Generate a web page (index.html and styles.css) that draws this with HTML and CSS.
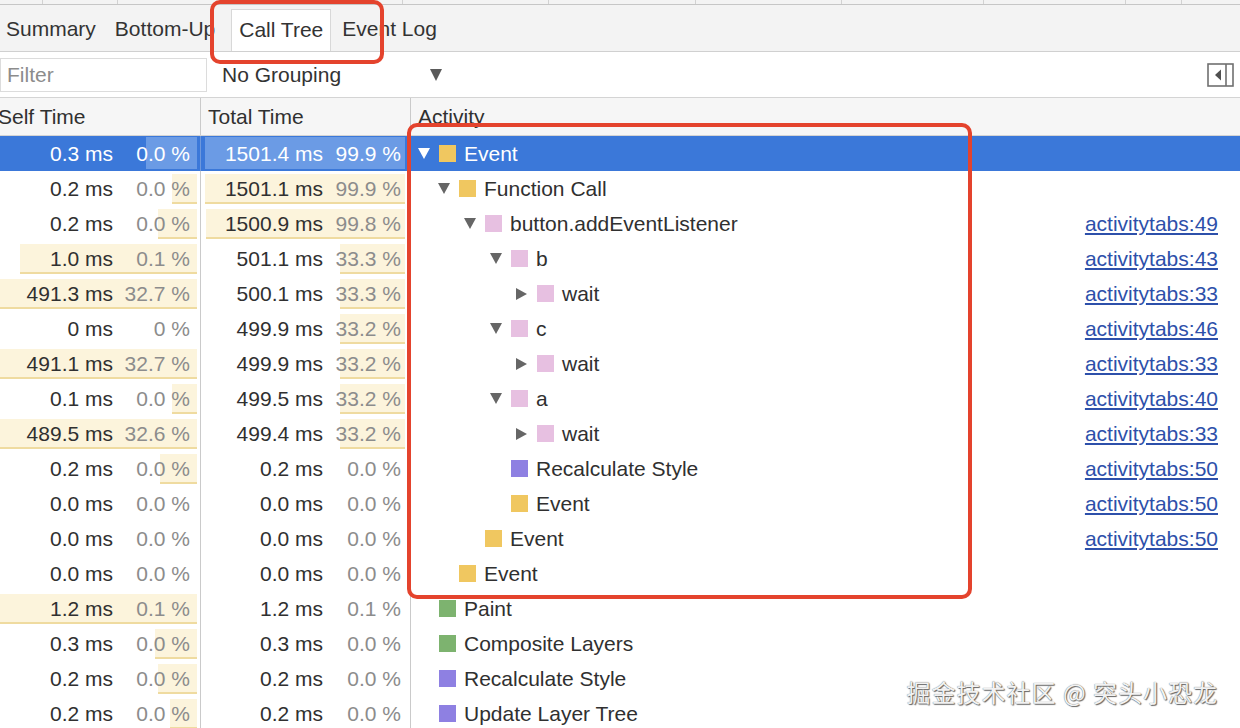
FILE: index.html
```html
<!DOCTYPE html>
<html lang="en">
<head>
    <meta charset="UTF-8">
    <meta name="viewport" content="width=device-width, initial-scale=1.0">
    <title>Call Tree</title>
    <link rel="stylesheet" href="styles.css">
</head>
<body>
<div class="panel">
    <!-- timeline overview ruler, cut off at the top -->
    <div class="ruler">
        <span style="width:43px"></span><span style="width:75px"></span><span style="width:285px"></span><span style="width:146px"></span><span style="width:147px"></span><span style="width:146px"></span><span style="width:142px"></span><span style="width:142px"></span><span style="width:56px"></span>
    </div>

    <div class="tabs">
        <div class="tab first">Summary</div>
        <div class="tab">Bottom-Up</div>
        <div class="tab active">Call Tree</div>
        <div class="tab">Event Log</div>
    </div>

    <div class="toolbar">
        <div class="filter">Filter</div>
        <div class="grouping">
            <span>No Grouping</span>
            <span class="arrow"></span>
        </div>
        <svg class="sidebar-toggle" width="27" height="24" viewBox="0 0 27 24">
            <rect x="1" y="1" width="25" height="22" fill="none" stroke="#707070" stroke-width="1.6"/>
            <line x1="19" y1="1" x2="19" y2="23" stroke="#707070" stroke-width="1.6"/>
            <polygon points="14,6.5 14,17.5 8,12" fill="#505050"/>
        </svg>
    </div>

    <div class="tree">
        <div class="row head">
            <div class="cell self-head">Self Time</div>
            <div class="cell total-head">Total Time</div>
            <div class="cell act-head">Activity</div>
        </div>

        <div class="row sel">
            <div class="cell time self"><span class="bar" style="width:51px"></span><span class="ms">0.3 ms</span><span class="pct">0.0 %</span></div>
            <div class="cell time total"><span class="bar" style="width:200px"></span><span class="ms">1501.4 ms</span><span class="pct">99.9 %</span></div>
            <div class="cell act d0"><span class="tog down"></span><span class="sq yellow"></span>Event</div>
        </div>
        <div class="row">
            <div class="cell time self"><span class="bar" style="width:25px"></span><span class="ms">0.2 ms</span><span class="pct">0.0 %</span></div>
            <div class="cell time total"><span class="bar" style="width:200px"></span><span class="ms">1501.1 ms</span><span class="pct">99.9 %</span></div>
            <div class="cell act d1"><span class="tog down"></span><span class="sq yellow"></span>Function Call</div>
        </div>
        <div class="row">
            <div class="cell time self"><span class="bar" style="width:39px"></span><span class="ms">0.2 ms</span><span class="pct">0.0 %</span></div>
            <div class="cell time total"><span class="bar" style="width:199px"></span><span class="ms">1500.9 ms</span><span class="pct">99.8 %</span></div>
            <div class="cell act d2"><span class="tog down"></span><span class="sq pink"></span>button.addEventListener<a class="link">activitytabs:49</a></div>
        </div>
        <div class="row">
            <div class="cell time self"><span class="bar" style="width:177px"></span><span class="ms">1.0 ms</span><span class="pct">0.1 %</span></div>
            <div class="cell time total"><span class="bar" style="width:65px"></span><span class="ms">501.1 ms</span><span class="pct">33.3 %</span></div>
            <div class="cell act d3"><span class="tog down"></span><span class="sq pink"></span>b<a class="link">activitytabs:43</a></div>
        </div>
        <div class="row">
            <div class="cell time self"><span class="bar" style="width:197px"></span><span class="ms">491.3 ms</span><span class="pct">32.7 %</span></div>
            <div class="cell time total"><span class="bar" style="width:65px"></span><span class="ms">500.1 ms</span><span class="pct">33.3 %</span></div>
            <div class="cell act d4"><span class="tog right"></span><span class="sq pink"></span>wait<a class="link">activitytabs:33</a></div>
        </div>
        <div class="row">
            <div class="cell time self"><span class="ms">0 ms</span><span class="pct">0 %</span></div>
            <div class="cell time total"><span class="bar" style="width:65px"></span><span class="ms">499.9 ms</span><span class="pct">33.2 %</span></div>
            <div class="cell act d3"><span class="tog down"></span><span class="sq pink"></span>c<a class="link">activitytabs:46</a></div>
        </div>
        <div class="row">
            <div class="cell time self"><span class="bar" style="width:197px"></span><span class="ms">491.1 ms</span><span class="pct">32.7 %</span></div>
            <div class="cell time total"><span class="bar" style="width:65px"></span><span class="ms">499.9 ms</span><span class="pct">33.2 %</span></div>
            <div class="cell act d4"><span class="tog right"></span><span class="sq pink"></span>wait<a class="link">activitytabs:33</a></div>
        </div>
        <div class="row">
            <div class="cell time self"><span class="bar" style="width:25px"></span><span class="ms">0.1 ms</span><span class="pct">0.0 %</span></div>
            <div class="cell time total"><span class="bar" style="width:65px"></span><span class="ms">499.5 ms</span><span class="pct">33.2 %</span></div>
            <div class="cell act d3"><span class="tog down"></span><span class="sq pink"></span>a<a class="link">activitytabs:40</a></div>
        </div>
        <div class="row">
            <div class="cell time self"><span class="bar" style="width:197px"></span><span class="ms">489.5 ms</span><span class="pct">32.6 %</span></div>
            <div class="cell time total"><span class="bar" style="width:65px"></span><span class="ms">499.4 ms</span><span class="pct">33.2 %</span></div>
            <div class="cell act d4"><span class="tog right"></span><span class="sq pink"></span>wait<a class="link">activitytabs:33</a></div>
        </div>
        <div class="row">
            <div class="cell time self"><span class="bar" style="width:37px"></span><span class="ms">0.2 ms</span><span class="pct">0.0 %</span></div>
            <div class="cell time total"><span class="ms">0.2 ms</span><span class="pct">0.0 %</span></div>
            <div class="cell act d3"><span class="tog"></span><span class="sq purple"></span>Recalculate Style<a class="link">activitytabs:50</a></div>
        </div>
        <div class="row">
            <div class="cell time self"><span class="ms">0.0 ms</span><span class="pct">0.0 %</span></div>
            <div class="cell time total"><span class="ms">0.0 ms</span><span class="pct">0.0 %</span></div>
            <div class="cell act d3"><span class="tog"></span><span class="sq yellow"></span>Event<a class="link">activitytabs:50</a></div>
        </div>
        <div class="row">
            <div class="cell time self"><span class="ms">0.0 ms</span><span class="pct">0.0 %</span></div>
            <div class="cell time total"><span class="ms">0.0 ms</span><span class="pct">0.0 %</span></div>
            <div class="cell act d2"><span class="tog"></span><span class="sq yellow"></span>Event<a class="link">activitytabs:50</a></div>
        </div>
        <div class="row">
            <div class="cell time self"><span class="ms">0.0 ms</span><span class="pct">0.0 %</span></div>
            <div class="cell time total"><span class="ms">0.0 ms</span><span class="pct">0.0 %</span></div>
            <div class="cell act d1"><span class="tog"></span><span class="sq yellow"></span>Event</div>
        </div>
        <div class="row">
            <div class="cell time self"><span class="bar" style="width:197px"></span><span class="ms">1.2 ms</span><span class="pct">0.1 %</span></div>
            <div class="cell time total"><span class="ms">1.2 ms</span><span class="pct">0.1 %</span></div>
            <div class="cell act d0"><span class="tog"></span><span class="sq green"></span>Paint</div>
        </div>
        <div class="row">
            <div class="cell time self"><span class="bar" style="width:42px"></span><span class="ms">0.3 ms</span><span class="pct">0.0 %</span></div>
            <div class="cell time total"><span class="ms">0.3 ms</span><span class="pct">0.0 %</span></div>
            <div class="cell act d0"><span class="tog"></span><span class="sq green"></span>Composite Layers</div>
        </div>
        <div class="row">
            <div class="cell time self"><span class="bar" style="width:39px"></span><span class="ms">0.2 ms</span><span class="pct">0.0 %</span></div>
            <div class="cell time total"><span class="ms">0.2 ms</span><span class="pct">0.0 %</span></div>
            <div class="cell act d0"><span class="tog"></span><span class="sq purple"></span>Recalculate Style</div>
        </div>
        <div class="row">
            <div class="cell time self"><span class="bar" style="width:27px"></span><span class="ms">0.2 ms</span><span class="pct">0.0 %</span></div>
            <div class="cell time total"><span class="ms">0.2 ms</span><span class="pct">0.0 %</span></div>
            <div class="cell act d0"><span class="tog"></span><span class="sq purple"></span>Update Layer Tree</div>
        </div>
    </div>

    <!-- red annotation frames drawn over the screenshot -->
    <div class="mark mark-tab"></div>
    <div class="mark mark-tree"></div>

    <div class="watermark">掘金技术社区 @ 突头小恐龙</div>
</div>
</body>
</html>
```

FILE: styles.css
```css
* {
    box-sizing: border-box;
}

body {
    margin: 0;
    font-family: "Liberation Sans", Arial, sans-serif;
    font-size: 21px;
    color: #303030;
    background: #fff;
    overflow: hidden;
}

.panel {
    position: relative;
    width: 1240px;
    height: 728px;
    overflow: hidden;
}

.ruler {
    display: flex;
    height: 5px;
    background: #f3f3f3;
    border-bottom: 1px solid #c6c6c6;
}
.ruler span {
    flex: none;
    border-right: 1px solid #d2d2d2;
}

.tabs {
    display: flex;
    align-items: flex-end;
    gap: 3px;
    height: 47px;
    background: #f3f3f3;
    border-bottom: 1px solid #d0d0d0;
}
.tab {
    height: 42px;
    line-height: 40px;
    padding: 0 8px;
    color: #333;
}
.tab.first {
    margin-left: -2px;
}
.tab.active {
    margin-left: 5px;
    background: #fff;
    border: 1px solid #d8d8d8;
    border-bottom: none;
    padding: 0 7px;
}

.toolbar {
    display: flex;
    align-items: center;
    height: 46px;
    background: #fff;
    border-bottom: 1px solid #d4d4d4;
}
.filter {
    display: flex;
    align-items: center;
    width: 207px;
    height: 34px;
    padding-left: 6px;
    border: 1px solid #dcdcdc;
    color: #8c8c8c;
}
.grouping {
    display: flex;
    align-items: center;
    justify-content: space-between;
    width: 220px;
    margin-left: 15px;
    color: #333;
}
.arrow {
    width: 0;
    height: 0;
    border-left: 6px solid transparent;
    border-right: 6px solid transparent;
    border-top: 12px solid #5a5a5a;
}
.sidebar-toggle {
    margin-left: auto;
    margin-right: 6px;
}

.row {
    display: grid;
    grid-template-columns: 201px 210px 1fr;
    height: 35px;
}
.row.head {
    height: 38px;
    background: #f6f6f6;
    border-bottom: 1px solid #d4d4d4;
}
.cell {
    position: relative;
    display: flex;
    align-items: center;
    border-right: 1px solid #cacaca;
    white-space: nowrap;
    overflow: hidden;
}
.self-head {
    padding-left: 0;
    text-indent: -2px;
}
.total-head {
    padding-left: 7px;
}
.act-head {
    padding-left: 7px;
    border-right: none;
}

.time {
    justify-content: flex-end;
}
.time.self {
    padding-right: 10px;
}
.time.total {
    padding-right: 9px;
}
.ms,
.pct {
    position: relative;
}
.pct {
    width: 77px;
    text-align: right;
    color: #8c8c8c;
}
.time.total .pct {
    width: 78px;
}
.bar {
    position: absolute;
    right: 3px;
    top: 3px;
    bottom: 2px;
    background: #fcf4dc;
    border-bottom: 2px solid #efdba0;
}
.time.total .bar {
    right: 5px;
}

.sel {
    background: #3b78d9;
    color: #fff;
}
.sel .pct {
    color: #fff;
}
.sel .cell {
    border-right-color: #6e98dc;
}
.sel .bar {
    top: 1px;
    bottom: 2px;
    background: #6b9be5;
    border-bottom: none;
}

.act {
    padding-right: 22px;
    border-right: none;
}
.d0 { padding-left: 7px; }
.d1 { padding-left: 27px; }
.d2 { padding-left: 53px; }
.d3 { padding-left: 79px; }
.d4 { padding-left: 105px; }

.tog {
    flex: none;
    width: 21px;
    display: flex;
    align-items: center;
}
.tog.down::before {
    content: "";
    border-left: 6px solid transparent;
    border-right: 6px solid transparent;
    border-top: 11px solid #666;
}
.tog.right::before {
    content: "";
    border-top: 6px solid transparent;
    border-bottom: 6px solid transparent;
    border-left: 11px solid #666;
}
.sel .tog.down::before {
    border-top-color: #fff;
}

.sq {
    flex: none;
    width: 17px;
    height: 17px;
    margin-right: 8px;
}
.yellow { background: #f0c760; }
.pink { background: #e7c0e1; }
.purple { background: #8e80e2; }
.green { background: #7db36f; }

.link {
    margin-left: auto;
    color: #2d50aa;
    text-decoration: underline;
}

.mark {
    position: absolute;
    border: 4px solid #e4432d;
    border-radius: 10px;
}
.mark-tab {
    left: 210px;
    top: 0;
    width: 174px;
    height: 64px;
}
.mark-tree {
    left: 407px;
    top: 123px;
    width: 565px;
    height: 476px;
}

.watermark {
    position: absolute;
    right: 22px;
    top: 678px;
    font-family: "Noto Sans CJK SC", "Liberation Sans", sans-serif;
    font-size: 24px;
    line-height: 28px;
    letter-spacing: 1px;
    color: #f2f2f2;
    text-shadow: 0 0 1px #555, 1px 1px 1px #666;
}
```
